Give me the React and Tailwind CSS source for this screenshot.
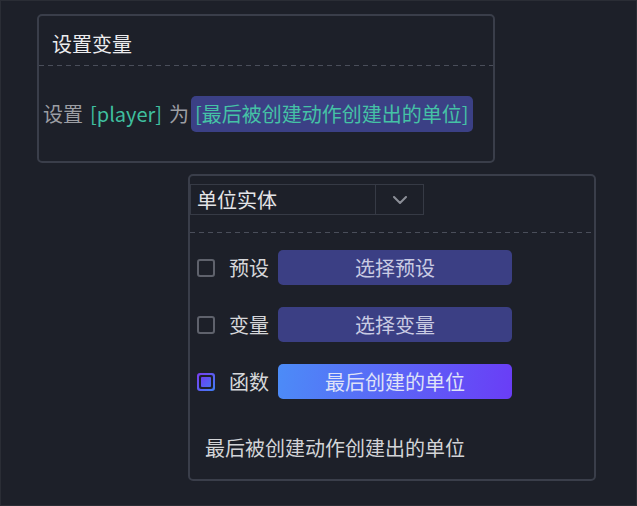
import React from 'react';

const dash = 'h-px bg-[linear-gradient(to_right,#4a4e5a_55%,transparent_0)] bg-[length:9px_1px]';

function Checkbox({ checked }) {
    if (checked) {
        return (
            <span className="w-[18px] h-[18px] rounded-[3px] p-[2px] bg-[linear-gradient(135deg,#7a3cf0,#3f7ff5)] flex">
                <span className="flex-1 rounded-[2px] bg-[#1d2029] p-[2px] flex">
                    <span className="flex-1 rounded-[1px] bg-[linear-gradient(135deg,#6a40f0,#4a6df2)]" />
                </span>
            </span>
        );
    }
    return <span className="w-[18px] h-[18px] rounded-[3px] border-2 border-[#5f626c]" />;
}

function OptionRow({ label, text, checked }) {
    return (
        <div className="flex items-center h-[35px]">
            <div className="ml-[7px] mr-[14px] flex">
                <Checkbox checked={checked} />
            </div>
            <span className="w-[49px] text-[#d6d7da]">{label}</span>
            <button
                type="button"
                className={
                    checked
                        ? 'w-[234px] h-[35px] rounded-[5px] bg-[linear-gradient(100deg,#4c8cf7,#6a3df6)] text-[#dfe2f7]'
                        : 'w-[234px] h-[35px] rounded-[5px] bg-[#3b3f84] text-[#c9cbe3]'
                }
            >
                {text}
            </button>
        </div>
    );
}

export default function App() {
    return (
        <div className="w-[637px] h-[506px] bg-[#1d2029] border border-[#2a2d35] text-[20px] font-['Noto_Sans_CJK_SC',sans-serif] flex flex-col">
            <section className="ml-[36px] mt-[13px] w-[458px] h-[149px] border-2 border-[#3a3e4a] rounded-[5px] flex flex-col">
                <div className="h-[49px] pt-[7px] px-[13px] flex items-center text-[#ececee]">设置变量</div>
                <div className={dash} />
                <div className="flex-1 flex items-center pl-[4px]">
                    <span className="text-[#9c9ea3]">设置</span>
                    <span className="ml-[7px] text-[#3fbf9f]">[player]</span>
                    <span className="ml-[7px] text-[#9c9ea3]">为</span>
                    <span className="ml-[2px] h-[36px] px-[4px] rounded-[5px] bg-[#3b4085] text-[#45c2a6] flex items-center">
                        [最后被创建动作创建出的单位]
                    </span>
                </div>
            </section>

            <section className="ml-[187px] mt-[11px] w-[408px] h-[307px] border-2 border-[#3a3e4a] rounded-[5px] flex flex-col">
                <div className="mt-[8px] w-[234px] h-[31px] border border-[#363a45] flex">
                    <span className="flex-1 pl-[6px] flex items-center text-[#e4e5e8]">单位实体</span>
                    <span className="w-[48px] border-l border-[#363a45] flex items-center justify-center">
                        <svg width="14" height="8" viewBox="0 0 14 8" fill="none">
                            <path d="M1 1l6 6 6-6" stroke="#8b8e97" strokeWidth="2" strokeLinecap="round" strokeLinejoin="round" />
                        </svg>
                    </span>
                </div>
                <div className={`mt-[17px] ${dash}`} />
                <div className="mt-[17px] flex flex-col gap-[22px]">
                    <OptionRow label="预设" text="选择预设" />
                    <OptionRow label="变量" text="选择变量" />
                    <OptionRow label="函数" text="最后创建的单位" checked />
                </div>
                <p className="mt-[34px] pl-[15px] text-[#d3d4d7]">最后被创建动作创建出的单位</p>
            </section>
        </div>
    );
}
